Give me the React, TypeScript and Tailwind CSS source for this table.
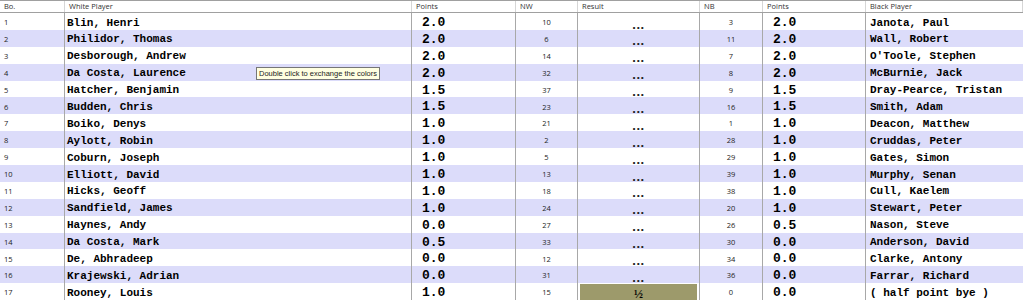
type Pairing = {
  bo: number;
  white: string;
  wPts: string;
  nw: number;
  result: string;
  nb: number;
  bPts: string;
  black: string;
};

const pairings: Pairing[] = [
  { bo: 1, white: "Blin, Henri", wPts: "2.0", nw: 10, result: "...", nb: 3, bPts: "2.0", black: "Janota, Paul" },
  { bo: 2, white: "Philidor, Thomas", wPts: "2.0", nw: 6, result: "...", nb: 11, bPts: "2.0", black: "Wall, Robert" },
  { bo: 3, white: "Desborough, Andrew", wPts: "2.0", nw: 14, result: "...", nb: 7, bPts: "2.0", black: "O'Toole, Stephen" },
  { bo: 4, white: "Da Costa, Laurence", wPts: "2.0", nw: 32, result: "...", nb: 8, bPts: "2.0", black: "McBurnie, Jack" },
  { bo: 5, white: "Hatcher, Benjamin", wPts: "1.5", nw: 37, result: "...", nb: 9, bPts: "1.5", black: "Dray-Pearce, Tristan" },
  { bo: 6, white: "Budden, Chris", wPts: "1.5", nw: 23, result: "...", nb: 16, bPts: "1.5", black: "Smith, Adam" },
  { bo: 7, white: "Boiko, Denys", wPts: "1.0", nw: 21, result: "...", nb: 1, bPts: "1.0", black: "Deacon, Matthew" },
  { bo: 8, white: "Aylott, Robin", wPts: "1.0", nw: 2, result: "...", nb: 28, bPts: "1.0", black: "Cruddas, Peter" },
  { bo: 9, white: "Coburn, Joseph", wPts: "1.0", nw: 5, result: "...", nb: 29, bPts: "1.0", black: "Gates, Simon" },
  { bo: 10, white: "Elliott, David", wPts: "1.0", nw: 13, result: "...", nb: 39, bPts: "1.0", black: "Murphy, Senan" },
  { bo: 11, white: "Hicks, Geoff", wPts: "1.0", nw: 18, result: "...", nb: 38, bPts: "1.0", black: "Cull, Kaelem" },
  { bo: 12, white: "Sandfield, James", wPts: "1.0", nw: 24, result: "...", nb: 20, bPts: "1.0", black: "Stewart, Peter" },
  { bo: 13, white: "Haynes, Andy", wPts: "0.0", nw: 27, result: "...", nb: 26, bPts: "0.5", black: "Nason, Steve" },
  { bo: 14, white: "Da Costa, Mark", wPts: "0.5", nw: 33, result: "...", nb: 30, bPts: "0.0", black: "Anderson, David" },
  { bo: 15, white: "De, Abhradeep", wPts: "0.0", nw: 12, result: "...", nb: 34, bPts: "0.0", black: "Clarke, Antony" },
  { bo: 16, white: "Krajewski, Adrian", wPts: "0.0", nw: 31, result: "...", nb: 36, bPts: "0.0", black: "Farrar, Richard" },
  { bo: 17, white: "Rooney, Louis", wPts: "1.0", nw: 15, result: "½", nb: 0, bPts: "0.0", black: "( half point bye )" },
];

const cols = "grid grid-cols-[65px_347px_104px_62px_122px_63px_103px_157px]";
const mono = "font-['Liberation_Mono','Courier_New',monospace] font-bold text-[11px] text-black";
const small = "font-['Open_Sans','Liberation_Sans',sans-serif] text-[7.5px] text-[#222]";

const headers = ["Bo.", "White Player", "Points", "NW", "Result", "NB", "Points", "Black Player"];

export default function App() {
  return (
    <div className="relative w-[1023px] h-[300px] overflow-hidden bg-white">
      <div className={`${cols} h-[13px] border-t border-b border-[#a0a0a0] bg-white`}>
        {headers.map((h, i) => (
          <div
            key={i}
            className={`${small} flex items-center pl-[4px] border-r border-[#d6d6d6] text-[#333]`}
          >
            {h}
          </div>
        ))}
      </div>

      {pairings.map((p, i) => (
        <div
          key={p.bo}
          className={`${cols} h-[16.9px] ${i % 2 === 1 ? "bg-[#dcdcfa]" : "bg-white"}`}
        >
          <div className={`${small} flex items-center pl-[4px] border-r border-[#a8a8a8]`}>{p.bo}</div>
          <div className={`${mono} flex items-center pl-[2px] border-r border-[#a8a8a8]`}>{p.white}</div>
          <div className={`${mono} text-[13px] flex items-center pl-[10px] border-r border-[#a8a8a8]`}>{p.wPts}</div>
          <div className={`${small} flex items-center justify-center border-r border-[#a8a8a8]`}>{p.nw}</div>
          {p.result === "½" ? (
            <div className="flex border-r border-[#a8a8a8] bg-white px-[2px] pt-[1px]">
              <div className="flex-1 flex items-center justify-center bg-[#9d9a6b] font-['Liberation_Serif',serif] font-bold text-[12px] text-black">
                ½
              </div>
            </div>
          ) : (
            <div className="flex items-end justify-center pb-[2px] border-r border-[#a8a8a8] font-['Liberation_Sans',sans-serif] font-bold text-[13px] leading-[13px] tracking-[0.5px] text-[#222]">
              {p.result}
            </div>
          )}
          <div className={`${small} flex items-center justify-center border-r border-[#a8a8a8]`}>{p.nb}</div>
          <div className={`${mono} text-[13px] flex items-center pl-[10px] border-r border-[#a8a8a8]`}>{p.bPts}</div>
          <div className={`${mono} flex items-center pl-[4px]`}>{p.black}</div>
        </div>
      ))}

      <div className="absolute left-[256px] top-[67px] h-[13px] px-[2px] flex items-center border border-[#767676] bg-[#ffffe1] font-['Liberation_Sans',sans-serif] text-[7.5px] text-[#222] whitespace-nowrap">
        Double click to exchange the colors
      </div>
    </div>
  );
}
